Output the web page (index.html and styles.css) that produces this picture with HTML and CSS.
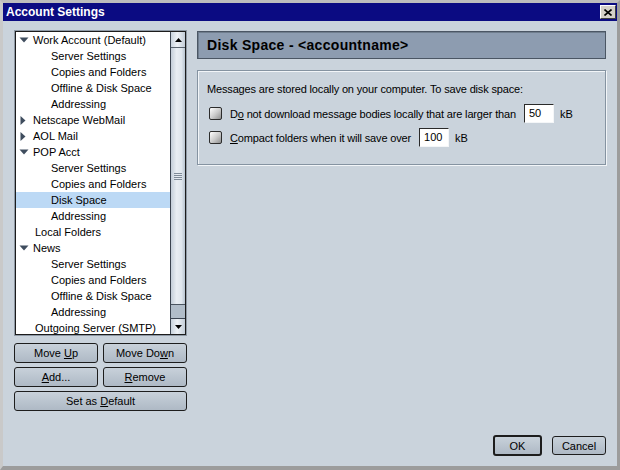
FILE: index.html
```html
<!DOCTYPE html>
<html>
<head>
<meta charset="utf-8">
<link rel="stylesheet" href="styles.css">
</head>
<body>
<div class="window">
  <div class="titlebar">
    <span class="title">Account Settings</span>
    <span class="close"><svg width="8" height="7" viewBox="0 0 8 7"><path d="M0.5 0.5 L7.5 6.5 M7.5 0.5 L0.5 6.5" stroke="#000" stroke-width="1.6" fill="none"/></svg></span>
  </div>
  <div class="main">
    <div class="sidebar">
      <div class="tree">
        <ul class="rows">
          <li class="row top"><svg class="twisty" width="10" height="6" viewBox="0 0 10 6"><polygon points="0.5,0.5 9.5,0.5 5,5.5" fill="#3f4d5e"/></svg>Work Account (Default)</li>
          <li class="row child">Server Settings</li>
          <li class="row child">Copies and Folders</li>
          <li class="row child">Offline &amp; Disk Space</li>
          <li class="row child">Addressing</li>
          <li class="row top"><svg class="twisty" width="10" height="9" viewBox="0 0 10 9"><polygon points="1.5,0 6.5,4.5 1.5,9" fill="#3f4d5e"/></svg>Netscape WebMail</li>
          <li class="row top"><svg class="twisty" width="10" height="9" viewBox="0 0 10 9"><polygon points="1.5,0 6.5,4.5 1.5,9" fill="#3f4d5e"/></svg>AOL Mail</li>
          <li class="row top"><svg class="twisty" width="10" height="6" viewBox="0 0 10 6"><polygon points="0.5,0.5 9.5,0.5 5,5.5" fill="#3f4d5e"/></svg>POP Acct</li>
          <li class="row child">Server Settings</li>
          <li class="row child">Copies and Folders</li>
          <li class="row child selected">Disk Space</li>
          <li class="row child">Addressing</li>
          <li class="row leaf">Local Folders</li>
          <li class="row top"><svg class="twisty" width="10" height="6" viewBox="0 0 10 6"><polygon points="0.5,0.5 9.5,0.5 5,5.5" fill="#3f4d5e"/></svg>News</li>
          <li class="row child">Server Settings</li>
          <li class="row child">Copies and Folders</li>
          <li class="row child">Offline &amp; Disk Space</li>
          <li class="row child">Addressing</li>
          <li class="row leaf">Outgoing Server (SMTP)</li>
        </ul>
        <div class="scrollbar">
          <div class="sb-btn"><svg width="7" height="4" viewBox="0 0 7 4"><polygon points="0,4 3.5,0 7,4" fill="#000"/></svg></div>
          <div class="sb-thumb"><span class="grip"></span></div>
          <div class="sb-track"></div>
          <div class="sb-btn down"><svg width="7" height="4" viewBox="0 0 7 4"><polygon points="0,0 3.5,4 7,0" fill="#000"/></svg></div>
        </div>
      </div>
      <div class="actions">
        <button class="btn">Move <u>U</u>p</button>
        <button class="btn">Move Do<u>w</u>n</button>
        <button class="btn"><u>A</u>dd...</button>
        <button class="btn"><u>R</u>emove</button>
        <button class="btn wide">Set as <u>D</u>efault</button>
      </div>
    </div>
    <div class="panel">
      <div class="panel-header">Disk Space - &lt;accountname&gt;</div>
      <div class="group">
        <div class="intro">Messages are stored locally on your computer. To save disk space:</div>
        <div class="opt">
          <span class="check"></span>
          <span class="label">D<u>o</u> not download message bodies locally that are larger than</span>
          <span class="field">50</span>
          <span class="unit">kB</span>
        </div>
        <div class="opt">
          <span class="check"></span>
          <span class="label"><u>C</u>ompact folders when it will save over</span>
          <span class="field">100</span>
          <span class="unit">kB</span>
        </div>
      </div>
    </div>
  </div>
  <div class="footer">
    <button class="btn ok">OK</button>
    <button class="btn cancel">Cancel</button>
  </div>
</div>
</body>
</html>
```
FILE: styles.css
```css
html, body {
  margin: 0;
  padding: 0;
  background: #cad3dc;
}
body {
  font-family: "Liberation Sans", Arial, sans-serif;
  font-size: 11px;
  color: #000;
}
.window {
  width: 620px;
  height: 470px;
  box-sizing: border-box;
  border: 3px solid #bdbdbd;
  border-left-color: #c9c9c9;
  border-bottom-width: 4px;
  border-bottom-color: #9c9c9c;
  border-right-color: #9c9c9c;
  background: #cad3dc;
  display: flex;
  flex-direction: column;
}
.titlebar {
  height: 18px;
  background: #0b0b82;
  color: #fff;
  display: flex;
  align-items: center;
  justify-content: space-between;
  padding: 0 1px 0 3px;
}
.title {
  font-weight: bold;
  font-size: 12px;
  line-height: 18px;
}
.close {
  width: 16px;
  height: 14px;
  box-sizing: border-box;
  background: #d4d0c8;
  border: 1px solid;
  border-color: #fff #404040 #404040 #fff;
  display: flex;
  align-items: center;
  justify-content: center;
}
.main {
  flex: 1;
  display: flex;
  gap: 10px;
  padding: 10px 11px 0 11px;
}
.sidebar {
  width: 173px;
  display: flex;
  flex-direction: column;
  gap: 8px;
}
.tree {
  margin: 0 1px;
  height: 304px;
  box-sizing: border-box;
  border: 1px solid #1c1c1c;
  box-shadow: 0 0 0 1px #8e99a5;
  background: #fff;
  display: flex;
  overflow: hidden;
}
.rows {
  list-style: none;
  margin: 0;
  padding: 0;
  flex: 1;
  overflow: hidden;
}
.row {
  height: 16px;
  line-height: 16px;
  white-space: nowrap;
  display: flex;
  align-items: center;
}
.row.top { padding-left: 3px; }
.row.leaf { padding-left: 19px; }
.row.child { padding-left: 35px; }
.row.selected { background: #bcd9f5; }
.twisty {
  margin-right: 4px;
  flex: none;
}
.scrollbar {
  width: 15px;
  box-sizing: border-box;
  border-left: 1px solid #3b4450;
  display: flex;
  flex-direction: column;
}
.sb-btn {
  height: 16px;
  box-sizing: border-box;
  background: linear-gradient(90deg, #c9d3dd, #eef2f6 45%, #c3cdd8);
  border-bottom: 1px solid #59636e;
  display: flex;
  align-items: center;
  justify-content: center;
}
.sb-btn.down {
  border-bottom: none;
  border-top: 1px solid #3b4450;
}
.sb-thumb {
  height: 257px;
  box-sizing: border-box;
  background: linear-gradient(90deg, #c4ced9, #e9eef3 40%, #dfe6ed 75%, #b9c5d1);
  border-bottom: 1px solid #4b5560;
  display: flex;
  align-items: center;
  justify-content: center;
}
.grip {
  width: 8px;
  height: 7px;
  background: repeating-linear-gradient(180deg, #7f8b98 0 1px, transparent 1px 2px);
}
.sb-track {
  flex: 1;
  background: #b1bdc9;
}
.actions {
  display: grid;
  grid-template-columns: 1fr 1fr;
  gap: 4px 5px;
}
.btn {
  height: 20px;
  box-sizing: border-box;
  border: 1px solid #1d1d1d;
  border-radius: 3px;
  background: linear-gradient(#c8d1da, #aeb9c5);
  font-family: "Liberation Sans", Arial, sans-serif;
  font-size: 11px;
  color: #000;
  padding: 0;
  margin: 0;
  line-height: 16px;
}
.btn.wide { grid-column: span 2; }
.panel {
  flex: 1;
  display: flex;
  flex-direction: column;
  gap: 11px;
}
.panel-header {
  height: 28px;
  box-sizing: border-box;
  border: 1px solid #4b5664;
  box-shadow: inset 1px 1px 0 #6f7d8d;
  background: #8d9cb0;
  font-weight: bold;
  font-size: 14px;
  letter-spacing: 0.3px;
  line-height: 26px;
  padding-left: 9px;
}
.group {
  border: 1px solid #8593a1;
  box-shadow: inset 1px 1px 0 #f2f5f8, 1px 1px 0 #f2f5f8;
  padding: 10px 9px 17px 9px;
  display: flex;
  flex-direction: column;
  letter-spacing: -0.16px;
}
.intro {
  line-height: 16px;
  margin-bottom: 7px;
}
.opt {
  height: 19px;
  display: flex;
  align-items: center;
  margin-bottom: 5px;
}
.opt:last-child { margin-bottom: 0; }
.check {
  width: 13px;
  height: 13px;
  box-sizing: border-box;
  margin: 0 8px 0 2px;
  border: 1px solid #2c2c2c;
  border-radius: 2px;
  background: linear-gradient(135deg, #ffffff, #c9c9c9 55%, #8e8e8e);
  flex: none;
}
.field {
  width: 30px;
  height: 19px;
  box-sizing: border-box;
  margin: 0 6px 0 8px;
  border: 1px solid;
  border-color: #2a2a2a #f4f6f8 #f4f6f8 #2a2a2a;
  background: #fff;
  padding-left: 4px;
  line-height: 17px;
  letter-spacing: 0;
}
.unit { letter-spacing: 0; }
.footer {
  display: flex;
  justify-content: flex-end;
  align-items: center;
  gap: 10px;
  padding: 0 11px 10px 0;
}
.btn.ok {
  width: 49px;
  height: 21px;
  border-width: 2px;
}
.btn.cancel {
  width: 54px;
  height: 19px;
}
```
